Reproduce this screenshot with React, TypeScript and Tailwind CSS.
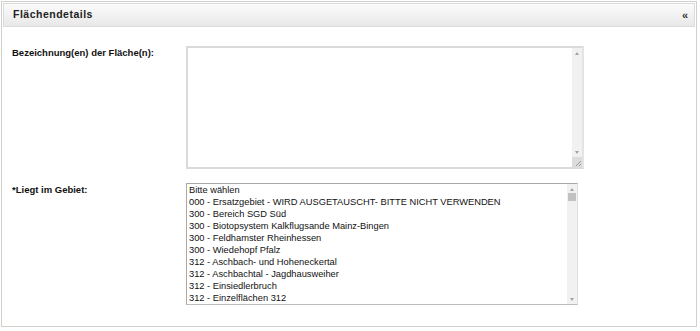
import React from 'react';

const gebiete = [
    'Bitte wählen',
    '000 - Ersatzgebiet - WIRD AUSGETAUSCHT- BITTE NICHT VERWENDEN',
    '300 - Bereich SGD Süd',
    '300 - Biotopsystem Kalkflugsande Mainz-Bingen',
    '300 - Feldhamster Rheinhessen',
    '300 - Wiedehopf Pfalz',
    '312 - Aschbach- und Hoheneckertal',
    '312 - Aschbachtal - Jagdhausweiher',
    '312 - Einsiedlerbruch',
    '312 - Einzelflächen 312',
];

// fake scrollbar column with tiny arrows
const ScrollTrack: React.FC<{ thumb?: boolean; grip?: boolean }> = ({ thumb, grip }) => (
    <div className="w-[10px] h-full bg-[#f1f1f1] flex flex-col items-center">
        <div className="h-[10px] w-full flex items-center justify-center">
            <div className="w-0 h-0 border-l-[2px] border-r-[2px] border-b-[3px] border-l-transparent border-r-transparent border-b-[#a3a3a3]" />
        </div>
        {thumb && <div className="w-[8px] h-[8px] bg-[#c1c1c1] mt-[-1px]" />}
        <div className="flex-1" />
        <div className="h-[10px] w-full flex items-center justify-center">
            <div className="w-0 h-0 border-l-[2px] border-r-[2px] border-t-[3px] border-l-transparent border-r-transparent border-t-[#a3a3a3]" />
        </div>
        {grip && (
            <div className="h-[10px] w-full bg-[#dcdcdc] flex items-end justify-end">
                <svg width="8" height="8" viewBox="0 0 8 8">
                    <path d="M7 2 L2 7 M7 5 L5 7" stroke="#999" strokeWidth="1" />
                </svg>
            </div>
        )}
    </div>
);

export default function App() {
    return (
        <div className="w-[700px] h-[331px] bg-white pt-[1px] pl-[1px] font-['Liberation_Sans',Arial,sans-serif] text-[#222]">
            <div className="w-[696px] h-[326px] border border-[#d2d0cb] p-[1px] flex flex-col">
                {/* Header */}
                <div className="h-[24px] border border-[#dcdcdc] bg-gradient-to-b from-[#fbfbfb] to-[#e8e8e8] flex items-center justify-between pl-[9px] pr-[6px]">
                    <span className="text-[10.5px] font-bold tracking-[0.5px] text-[#222]">Flächendetails</span>
                    <span className="text-[11px] font-bold leading-none text-[#333]">«</span>
                </div>

                {/* Body */}
                <div className="pl-[9px] pt-[19px] flex flex-col gap-[14px]">
                    <div className="flex">
                        <div className="w-[174px] text-[9.5px] font-bold leading-[12px] pt-[1px] text-[#111]">Bezeichnung(en) der Fläche(n):</div>
                        <div className="w-[398px] h-[123px] border-2 border-[#dadada] border-r-[#e4e4e4] bg-white flex justify-end">
                            <ScrollTrack grip />
                        </div>
                    </div>

                    <div className="flex">
                        <div className="w-[174px] text-[9.5px] font-bold leading-[12px] pt-[1px] text-[#111]">*Liegt im Gebiet:</div>
                        <div className="w-[392px] h-[122px] border border-[#a9a9a9] border-r-[#e0e0e0] border-b-[#bcbcbc] bg-white flex">
                            <div className="flex-1 flex flex-col pl-[2px] text-[9.3px] leading-[12px] text-[#111] overflow-hidden whitespace-nowrap">
                                {gebiete.map((g) => (
                                    <div key={g}>{g}</div>
                                ))}
                            </div>
                            <ScrollTrack thumb />
                        </div>
                    </div>
                </div>
            </div>
        </div>
    );
}
